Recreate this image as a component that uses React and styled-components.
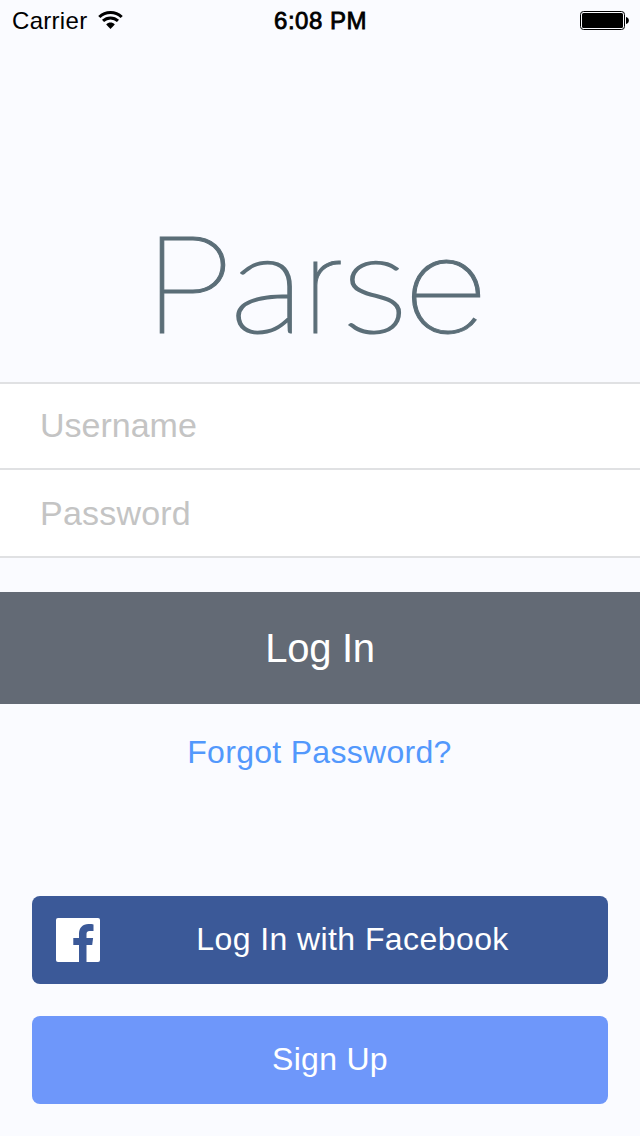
import React from 'react';
import styled, { createGlobalStyle } from 'styled-components';

const GlobalStyle = createGlobalStyle`
  * { box-sizing: border-box; }
  body {
    margin: 0;
    background: #fafbff;
    font-family: "Liberation Sans", Arial, sans-serif;
  }
`;

const Screen = styled.main`
  display: flex;
  flex-direction: column;
  width: 640px;
  height: 1136px;
  background: #fafbff;
  overflow: hidden;
`;

const StatusBar = styled.header`
  display: grid;
  grid-template-columns: 1fr auto 1fr;
  align-items: center;
  height: 42px;
  padding: 0 11px 0 12px;
  font-size: 24px;
  line-height: 42px;
  color: #000;
`;

const Carrier = styled.div`
  display: flex;
  align-items: center;
  gap: 11px;
  letter-spacing: 0.3px;
`;

const Clock = styled.time`
  letter-spacing: 0.5px;
  -webkit-text-stroke: 0.8px #000;
`;

const Battery = styled.svg`
  justify-self: end;
`;

const Brand = styled.h1`
  display: flex;
  justify-content: center;
  margin: 178px 0 32px;
  height: 130px;
`;

const Wordmark = styled.svg`
  overflow: visible;
  fill: #5b6e78;
  stroke: #5b6e78;
`;

const Letter = styled.text`
  font-family: ${({ $face }) => $face}, sans-serif;
  font-size: 134px;
  font-weight: 100;
`;

const Fields = styled.div`
  display: flex;
  flex-direction: column;
  border-top: 2px solid #e0e1e3;
`;

const Field = styled.input`
  display: block;
  width: 100%;
  height: ${({ $height }) => $height}px;
  padding: 0 40px ${({ $lift }) => $lift || 0}px;
  border: 0;
  border-bottom: 2px solid #e0e1e3;
  border-radius: 0;
  outline: 0;
  background: #fff;
  color: #333;
  font: 34px "Liberation Sans", Arial, sans-serif;
  letter-spacing: ${({ $spacing }) => $spacing || 0}px;
  &::placeholder { color: #c4c4c4; opacity: 1; }
`;

const LoginButton = styled.button`
  height: 112px;
  margin-top: 34px;
  padding: 0;
  border: 0;
  background: #636a75;
  color: #fff;
  font: 40px "Liberation Sans", Arial, sans-serif;
  letter-spacing: -0.3px;
`;

const ForgotLink = styled.a`
  align-self: center;
  margin: 28px 1px 0 0;
  font-size: 32px;
  line-height: 40px;
  letter-spacing: 0.3px;
  color: #5298fc;
`;

const Actions = styled.div`
  display: flex;
  flex-direction: column;
  gap: 32px;
  margin: auto 32px 32px;
`;

const ActionButton = styled.button`
  display: flex;
  align-items: center;
  height: 88px;
  padding: 0 24px;
  border: 0;
  border-radius: 8px;
  background: ${({ $color }) => $color};
  color: #fff;
  font: 32px "Liberation Sans", Arial, sans-serif;
`;

const ActionLabel = styled.span`
  flex: 1;
  padding: 0 0 2px ${({ $inset }) => $inset}px;
  letter-spacing: ${({ $spacing }) => $spacing}px;
  text-align: center;
`;

const WifiIcon = () => (
  <svg width="26" height="22" viewBox="0 0 26 22" fill="none" stroke="#000">
    <path d="M1.3 7C7.6 .9 17.4 .9 23.7 7" strokeWidth="3.1" />
    <path d="M5 10.9C9.3 6.9 15.7 6.9 20 10.9" strokeWidth="3" />
    <path d="M12.5 19L8.2 14.4C10.7 12 14.3 12 16.8 14.4Z" fill="#000" stroke="none" />
  </svg>
);

const FacebookIcon = ({ color }) => (
  <svg width="44" height="44" viewBox="0 0 44 44">
    <rect width="44" height="44" rx="2" fill="#fff" />
    <path d="M23 44V27H17.3V20H23V16C23 9.7 26.7 6 32.4 6C34.5 6 36.5 6.2 37.5 6.4V13H33.8C31 13 30.5 14.4 30.5 16.4V20H37.1L36.2 27H30.5V44Z" fill={color} />
  </svg>
);

const letters = [
  { char: 'P', face: 'Inter', x: 143, y: 112.6, scaleX: 1.14, scaleY: 0.98, weight: 1 },
  { char: 'a', face: 'Lato', x: 229.6, y: 111.8, scaleX: 1.18, scaleY: 1.05, weight: 2.3 },
  { char: 'r', face: 'Inter', x: 301.2, y: 112.6, scaleX: 0.98, scaleY: 0.975, weight: 1 },
  { char: 's', face: 'Lato', x: 341.2, y: 111.8, scaleX: 1.2, scaleY: 1.05, weight: 2.3 },
  { char: 'e', face: 'Inter', x: 403, y: 112.4, scaleX: 1.115, scaleY: 0.97, weight: 1 },
];

export default function App() {
  return (
    <>
      <GlobalStyle />
      <Screen>
        <StatusBar>
          <Carrier>Carrier <WifiIcon /></Carrier>
          <Clock>6:08 PM</Clock>
          <Battery width="49" height="20" viewBox="0 0 49 20">
            <rect x=".5" y=".5" width="44" height="18" rx="3" fill="none" stroke="#000" />
            <rect x="2" y="2" width="41" height="15" rx="1.5" />
            <path d="M46 6C49.8 6.5 49.8 12.5 46 13Z" />
          </Battery>
        </StatusBar>
        <Brand>
          <Wordmark width="640" height="130" viewBox="0 0 640 130" aria-label="Parse">
            {letters.map(({ char, face, x, y, scaleX, scaleY, weight }) => (
              <Letter key={char} $face={face} transform={`translate(${x} ${y}) scale(${scaleX} ${scaleY})`} strokeWidth={weight}>
                {char}
              </Letter>
            ))}
          </Wordmark>
        </Brand>
        <Fields>
          <Field $height={86} $lift={2} placeholder="Username" />
          <Field $height={88} $spacing={0.2} type="password" placeholder="Password" />
        </Fields>
        <LoginButton>Log In</LoginButton>
        <ForgotLink>Forgot Password?</ForgotLink>
        <Actions>
          <ActionButton $color="#3b5998">
            <FacebookIcon color="#3b5998" />
            <ActionLabel $inset={21} $spacing={0.42}>Log In with Facebook</ActionLabel>
          </ActionButton>
          <ActionButton $color="#6e97fa">
            <ActionLabel $inset={20} $spacing={0.3}>Sign Up</ActionLabel>
          </ActionButton>
        </Actions>
      </Screen>
    </>
  );
}
